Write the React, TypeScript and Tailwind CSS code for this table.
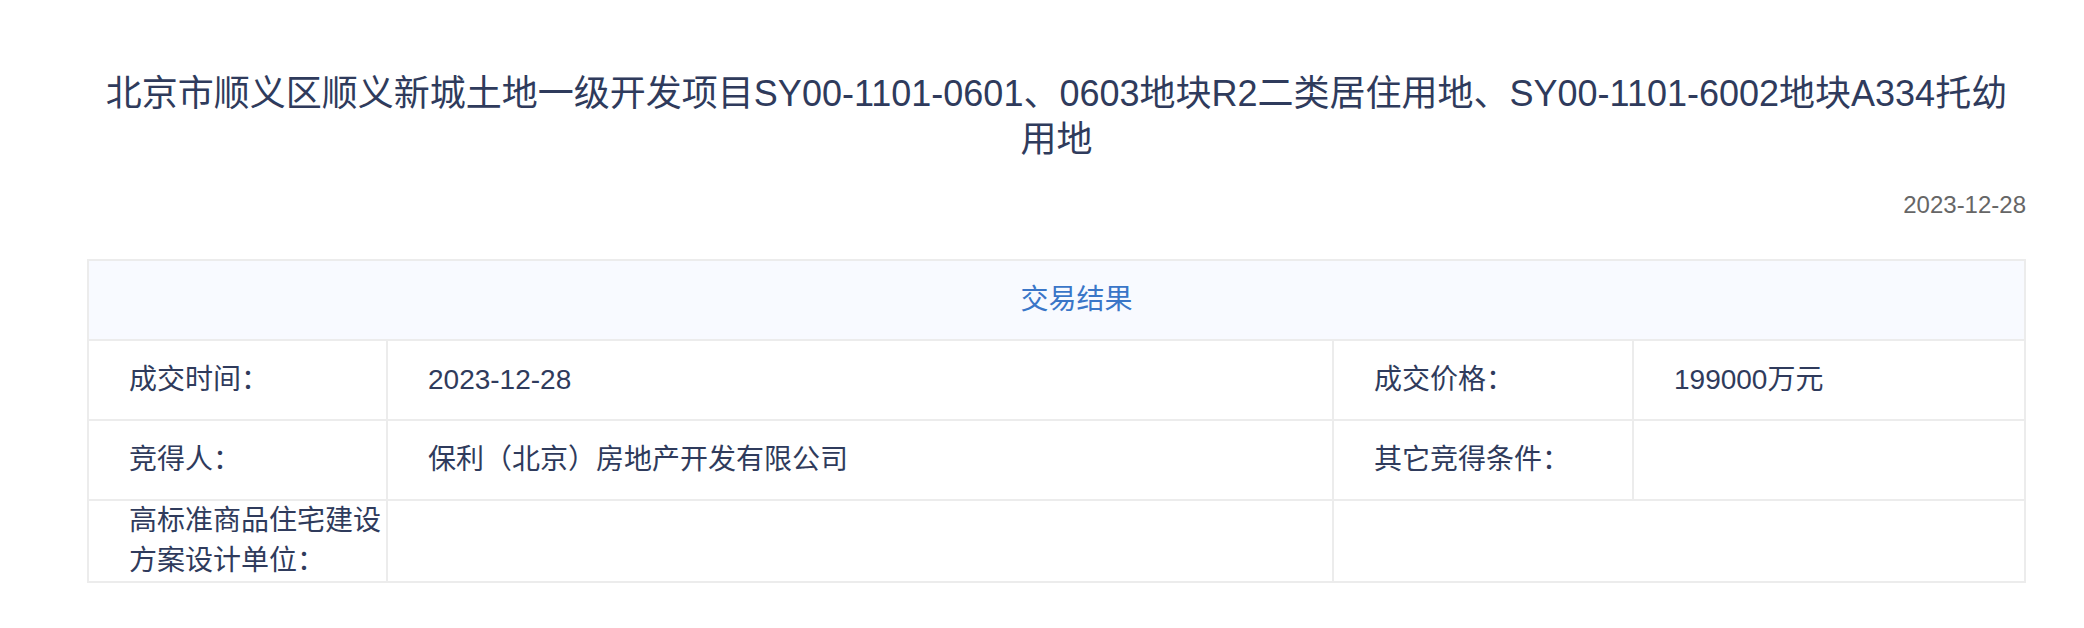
import React from "react";

const font = { fontFamily: '"Liberation Sans", "Noto Sans CJK SC", sans-serif' };

export default function App() {
  return (
    <div className="w-full bg-white pl-[87px] pr-[58px]" style={font}>
      <h1 className="px-[14px] pt-[71px] text-center text-[36px] leading-[46px] font-normal text-[#2f3b5c]">
        北京市顺义区顺义新城土地一级开发项目SY00-1101-0601、0603地块R2二类居住用地、SY00-1101-6002地块A334托幼用地
      </h1>
      <div className="mt-[26px] text-right text-[24px] leading-[32px] text-[#666666]">2023-12-28</div>
      <div className="mt-[38px] grid grid-cols-[299px_946px_300px_1fr] border-l-2 border-t-2 border-[#ececec] text-[28px] leading-[40px] text-[#2f3b5c]">
        <div className="col-span-4 flex h-[80px] items-center justify-center border-b-2 border-r-2 border-[#ececec] bg-[#f8faff] pl-[40px] text-[#3a76c8]">
          交易结果
        </div>

        <div className="flex min-h-[80px] items-center border-b-2 border-r-2 border-[#ececec] pl-[40px]">成交时间：</div>
        <div className="flex min-h-[80px] items-center border-b-2 border-r-2 border-[#ececec] pl-[40px]">2023-12-28</div>
        <div className="flex min-h-[80px] items-center border-b-2 border-r-2 border-[#ececec] pl-[40px]">成交价格：</div>
        <div className="flex min-h-[80px] items-center border-b-2 border-r-2 border-[#ececec] pl-[40px]">199000万元</div>

        <div className="flex min-h-[80px] items-center border-b-2 border-r-2 border-[#ececec] pl-[40px]">竞得人：</div>
        <div className="flex min-h-[80px] items-center border-b-2 border-r-2 border-[#ececec] pl-[40px]">保利（北京）房地产开发有限公司</div>
        <div className="flex min-h-[80px] items-center border-b-2 border-r-2 border-[#ececec] pl-[40px]">其它竞得条件：</div>
        <div className="flex min-h-[80px] items-center border-b-2 border-r-2 border-[#ececec] pl-[40px]"></div>

        <div className="flex min-h-[80px] items-center border-b-2 border-r-2 border-[#ececec] pl-[40px]">高标准商品住宅建设方案设计单位：</div>
        <div className="flex min-h-[80px] items-center border-b-2 border-r-2 border-[#ececec] pl-[40px]"></div>
        <div className="col-span-2 flex min-h-[80px] items-center border-b-2 border-r-2 border-[#ececec] pl-[40px]"></div>
      </div>
    </div>
  );
}
